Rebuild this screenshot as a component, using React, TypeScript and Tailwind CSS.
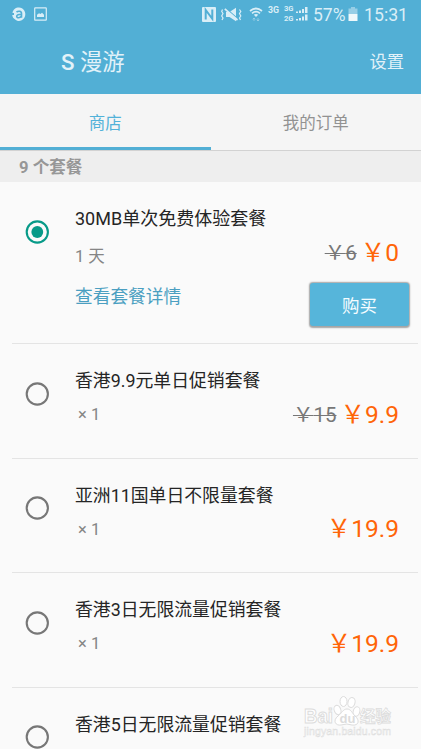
import React from 'react'

interface Plan {
  title: string
  amount?: string
  price?: string
  oldPrice?: string
  selected?: boolean
}

const plans: Plan[] = [
  { title: '30MB单次免费体验套餐', amount: '1 天', price: '0', oldPrice: '6', selected: true },
  { title: '香港9.9元单日促销套餐', amount: '× 1', price: '9.9', oldPrice: '15' },
  { title: '亚洲11国单日不限量套餐', amount: '× 1', price: '19.9' },
  { title: '香港3日无限流量促销套餐', amount: '× 1', price: '19.9' },
  { title: '香港5日无限流量促销套餐' },
]

const StatusBar: React.FC = () => (
  <div className="flex h-7 items-center justify-between pl-3 pr-[13px] text-[#d9eef7]">
    <div className="flex items-center gap-[8px]">
      <svg className="h-[15px] w-[14px]" viewBox="0 0 14 15">
        <path d="M7 .5A6.3 6.7 0 1 1 2.6 12C.5 10.500.3 9 .3 8H2V6H.5C1 2.500 3.500.5 7 .5Z" fill="currentColor" />
        <path d="M4.500 5.200C6 3.800 9.500 3.700 9.500 6.500V10.800M9.500 7.300C6.500 7.200 4.700 7.700 4.700 9.200C4.700 11.200 8 11.200 9.500 9" fill="none" stroke="#52afd5" strokeWidth="1.600" />
      </svg>
      <svg className="h-[14px] w-[13px]" viewBox="0 0 13 14" fill="none">
        <rect x=".7" y=".9" width="11.600" height="12.300" rx=".5" stroke="currentColor" strokeWidth="1.200" />
        <path d="M3 10V7.800L5 6.300L6.500 7L8 5.800L10 7.800V10Z" fill="currentColor" />
      </svg>
    </div>
    <div className="flex items-center">
      <svg className="h-[15px] w-[14px]" viewBox="0 0 14 15">
        <rect width="14" height="15" rx="1" fill="currentColor" />
        <path d="M3.700 12.500V3L10.300 11.800V2.500" fill="none" stroke="#52afd5" strokeWidth="2" />
      </svg>
      <svg className="ml-[5px] h-[15px] w-[21px]" viewBox="0 0 21 15" fill="none" stroke="currentColor">
        <path d="M5 5H8.500L15 .8V14.200L8.500 10H5Z" fill="currentColor" stroke="none" />
        <path d="M4.500 1L17 12" stroke="#52afd5" strokeWidth="1.200" />
        <path d="M3.800 1.800L16.500 13" strokeWidth="1.700" />
        <path d="M1.500 2.500L.7 4.500L2 6.500L.7 9L2 11L1 13M18.500 2.500L19.800 4.500L18.500 6.500L19.800 9L18.500 11L19.500 13" strokeWidth="1.200" />
      </svg>
      <svg className="ml-[7px] h-[15px] w-[14px]" viewBox="0 0 14 15" fill="none" stroke="currentColor">
        <path d="M1 4Q7 -1 13 4M3 6.300Q7 3 11 6.300" strokeWidth="1.700" />
        <path d="M4.800 7.800Q7 6.300 9.200 7.800L7 10Z" fill="currentColor" stroke="none" />
        <path d="M5 14V11M3.800 12.500L5 11L6.200 12.500M9 11V14M7.800 12.500L9 14L10.200 12.500" strokeWidth=".7" opacity=".6" />
      </svg>
      <span className="-mt-[7px] ml-[5px] w-[13px] text-[8.800px] font-bold leading-none">3G</span>
      <div className="ml-[3px] flex w-[12px] flex-col gap-[2px] text-[7.600px] font-bold leading-[8px]">
        <div>3G</div>
        <div>2G</div>
      </div>
      <svg className="h-[14px] w-[12px]" viewBox="0 0 12 14" fill="currentColor">
        <path d="M0 4.500H2V6H0ZM3 3.500H5V6H3ZM6 2H8V6H6ZM9 0H11.500V6H9ZM0 12H2V13.500H0ZM3 11H5V13.500H3ZM6 9.500H8V13.500H6ZM9 7.500H11.500V13.500H9Z" />
      </svg>
      <span className="ml-[5px] w-[32px] whitespace-nowrap pt-px text-[17.500px] leading-7">57%</span>
      <svg className="ml-[3px] h-[14px] w-[10px]" viewBox="0 0 10 14" fill="currentColor">
        <path d="M3 0H7V1.500H9.500V7H.5V1.500H3Z" opacity=".5" />
        <path d="M.5 7H9.500V14H.5Z" fill="#eff8fb" />
      </svg>
      <span className="ml-[6px] w-[44px] whitespace-nowrap pt-px text-right text-[17.700px] leading-7">15:31</span>
    </div>
  </div>
)

const Radio: React.FC<{ selected?: boolean }> = ({ selected }) => (
  <svg
    className={selected ? 'h-6 w-6 text-[#079a88]' : 'h-6 w-6 text-[#777777]'}
    viewBox="0 0 24 24"
    fill="none"
  >
    <circle cx="12.300" cy="12" r="10.600" stroke="currentColor" strokeWidth="2.100" />
    {selected && <circle cx="12.300" cy="12" r="5.900" fill="currentColor" />}
  </svg>
)

const PlanRow: React.FC<{ plan: Plan }> = ({ plan }) => (
  <li
    className={
      plan.selected
        ? 'ml-[12px] mr-[3px] flex h-[162px] shrink-0 border-b border-[#e4e4e4] pl-[13px] pr-[7px]'
        : 'ml-[12px] mr-[3px] flex h-[114.667px] shrink-0 border-b border-[#e4e4e4] pl-[13px] pr-[7px]'
    }
  >
    <div className={plan.selected ? 'w-[50px] shrink-0 pt-[38px]' : 'w-[50px] shrink-0 pt-[37.500px]'}>
      <Radio selected={plan.selected} />
    </div>
    <div className="flex min-w-0 flex-1 flex-col">
      <h3
        className={
          plan.selected
            ? 'mt-[24px] whitespace-nowrap text-[18px] leading-[26px] text-[#252525]'
            : 'mt-[24px] whitespace-nowrap text-[17.850px] leading-[26px] text-[#252525]'
        }
      >
        {plan.title}
      </h3>
      {plan.price && (
        <div className="mt-[8px] flex h-[26px] items-center justify-between pr-[12px]">
          <span
            className={
              plan.selected
                ? 'mt-[7px] text-[16.500px] leading-[24px] text-[#858585]'
                : 'ml-[3px] text-[16.500px] leading-[24px] text-[#858585]'
            }
          >
            {plan.amount}
          </span>
          <div className="-mt-px flex items-center whitespace-nowrap leading-[26px]">
            {plan.oldPrice && (
              <span className="mr-[4px] text-[20.500px] text-[#777777] line-through decoration-1">￥{plan.oldPrice}</span>
            )}
            <span className="text-[24.500px] text-[#ff6508]">￥{plan.price}</span>
          </div>
        </div>
      )}
      {plan.selected && (
        <div className="mt-[17px] flex items-start justify-between pr-[2px]">
          <a className="pt-px text-[17.700px] leading-[26px] text-[#4b9fc1]">查看套餐详情</a>
          <button className="h-[43px] w-[99px] rounded-[3px] bg-[#56b5da] pt-[3px] text-[17.500px] text-[#f4fcff] shadow-[0_0.5px_1.5px_1px_rgba(0,0,0,0.35)]">
            购买
          </button>
        </div>
      )}
    </div>
  </li>
)

const Watermark: React.FC = () => (
  <div className="absolute left-[303px] top-[694px] h-[46px] w-[92px]">
    <svg className="h-full w-full" viewBox="0 0 92 46" fill="#ffffff" stroke="#dcdcdc" strokeWidth="1">
      <text x="1" y="28.500" fontFamily="Liberation Sans" fontWeight="bold" fontSize="20" textLength="29" lengthAdjust="spacingAndGlyphs">Bai</text>
      <ellipse cx="34.500" cy="16" rx="3.300" ry="4.800" transform="rotate(-20 34.500 16)" />
      <ellipse cx="40.500" cy="7.500" rx="3.500" ry="5" />
      <ellipse cx="48.500" cy="8.500" rx="3.500" ry="5" transform="rotate(15 48.500 8.500)" />
      <ellipse cx="53.500" cy="17.500" rx="3.300" ry="4.800" transform="rotate(15 53.500 17.500)" />
      <path d="M44 15C40 15 39 19 35 22C29 27 33 32 38 31Q44 29 49 31C56 32 57 26 52 22C49 19 48 15 44 15Z" />
      <text x="36.500" y="28.500" fontFamily="Liberation Sans" fontWeight="bold" fontSize="13" fill="#dcdcdc" stroke="none">du</text>
      <text x="57" y="27.500" fontFamily="Noto Sans CJK SC" fontWeight="bold" fontSize="15.500" strokeWidth=".8">经验</text>
      <text x="1" y="41" fontFamily="Liberation Sans" fontSize="10.500" textLength="87" strokeWidth=".5">jingyan.baidu.com</text>
    </svg>
  </div>
)

export default function App() {
  return (
    <div className="relative flex h-[749px] w-[421px] flex-col overflow-hidden bg-[#fafafa] font-[Roboto,'Noto_Sans_CJK_SC',sans-serif]">
      <header className="h-[93.500px] shrink-0 bg-[#52afd5]">
        <StatusBar />
        <div className="flex h-[66px] items-center justify-between pl-[61px] pr-[17px] text-[#e2f2f9]">
          <h1 className="pt-[3px] text-[22.300px]"><span className="font-medium">S</span> 漫游</h1>
          <button className="pt-[4px] text-[17.300px]">设置</button>
        </div>
      </header>
      <nav className="flex h-[57.500px] shrink-0 border-b border-[#d2d2d2] bg-[#f5f5f5] text-[16.500px]">
        <button className="w-[210.500px] border-b-[3px] border-[#52afd5] pt-[8px] text-[#52b2d9]">商店</button>
        <button className="flex-1 pt-[5px] text-[#929292]">我的订单</button>
      </nav>
      <h2 className="flex h-[31px] shrink-0 items-center bg-[#eeeeee] pl-[19px] pt-[3px] text-[16.600px] font-bold text-[#979797]">9 个套餐</h2>
      <ul className="flex flex-col">
        {plans.map((plan) => (
          <PlanRow key={plan.title} plan={plan} />
        ))}
      </ul>
      <Watermark />
    </div>
  )
}
